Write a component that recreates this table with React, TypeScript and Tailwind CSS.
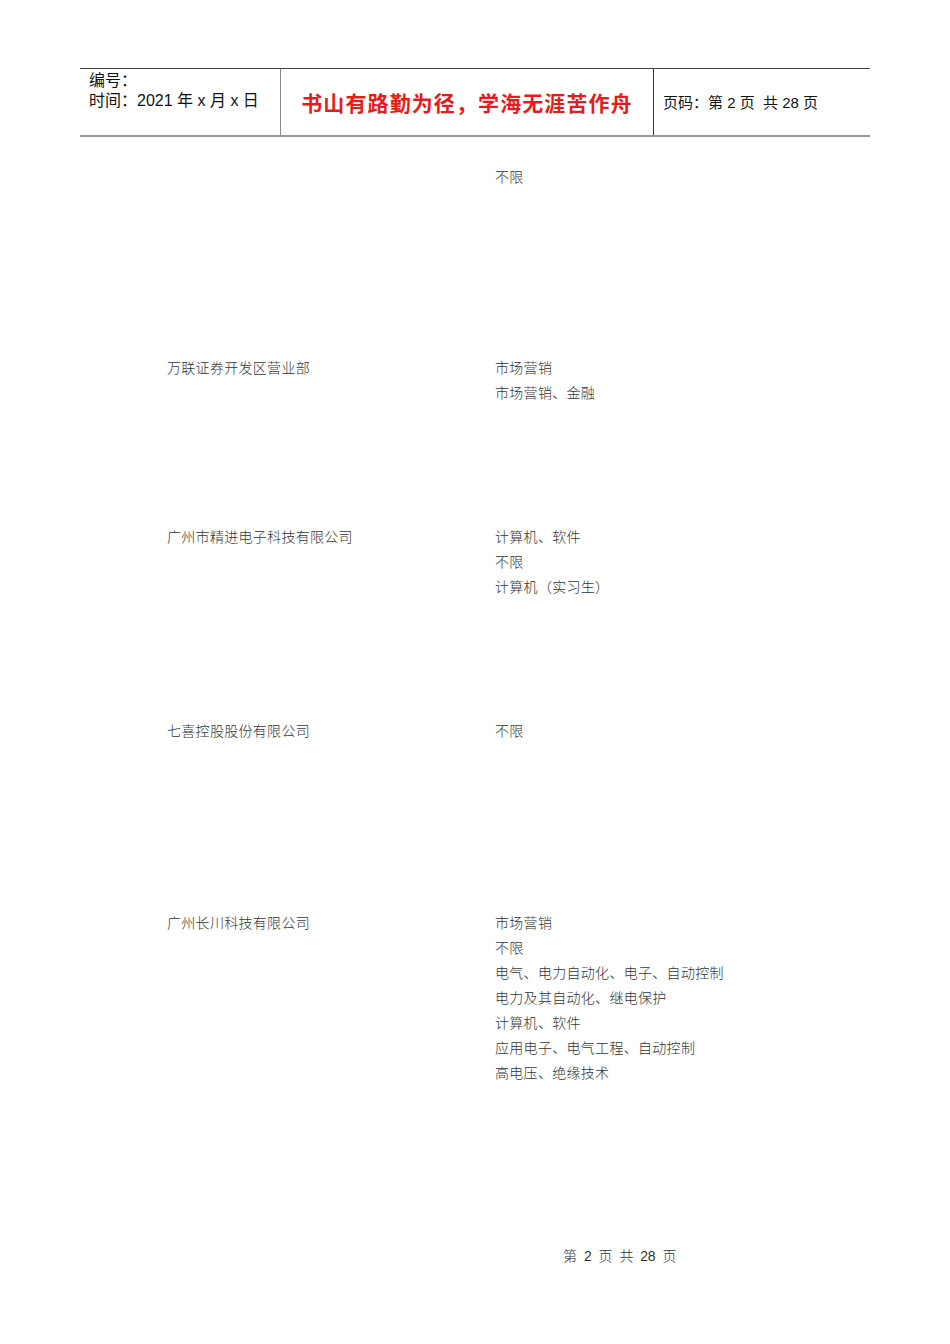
import React from "react";

const body = { fontFamily: '"Noto Sans CJK SC", "Liberation Sans", sans-serif' };
const head = { fontFamily: '"Liberation Sans", "Noto Sans CJK SC", sans-serif' };

function Block({ left, right, mt }: { left?: string; right: string[]; mt: string }) {
  return (
    <div className={`flex ${mt}`}>
      <div className="w-[495px] pl-[167px] text-[14px] leading-[25px] tracking-[0.3px] text-[#333] font-light">
        {left ?? ""}
      </div>
      <div className="flex flex-col text-[14px] leading-[25px] tracking-[0.3px] text-[#333] font-light">
        {right.map((r, i) => (
          <div key={i}>{r}</div>
        ))}
      </div>
    </div>
  );
}

export default function App() {
  return (
    <div className="w-[950px] h-[1344px] bg-white relative" style={body}>
      <div className="pt-[68px] px-[80px]">
        <div className="flex h-[69px] border-t border-[#444] border-b-2 border-b-[#999]" style={head}>
          <div className="w-[201px] border-r border-[#888] pl-[9px] pt-[2px] text-[16px] leading-[20px] text-[#111]">
            <div>编号：</div>
            <div>时间：2021 年 x 月 x 日</div>
          </div>
          <div className="w-[373px] border-r border-[#333] flex items-center justify-center pt-[2px]">
            <span
              className="text-[21px] font-semibold text-[#e51c1c] tracking-[1.1px]"
              style={body}
            >
              书山有路勤为径，学海无涯苦作舟
            </span>
          </div>
          <div className="flex-1 flex items-center pl-[9px] pt-[3px] text-[15px] text-[#111] whitespace-pre">
            页码：第 2 页  共 28 页
          </div>
        </div>
      </div>
      <div className="flex flex-col">
        <Block mt="mt-[27px]" right={["不限"]} />
        <Block mt="mt-[166px]" left="万联证券开发区营业部" right={["市场营销", "市场营销、金融"]} />
        <Block mt="mt-[119px]" left="广州市精进电子科技有限公司" right={["计算机、软件", "不限", "计算机（实习生）"]} />
        <Block mt="mt-[119px]" left="七喜控股股份有限公司" right={["不限"]} />
        <Block
          mt="mt-[167px]"
          left="广州长川科技有限公司"
          right={[
            "市场营销",
            "不限",
            "电气、电力自动化、电子、自动控制",
            "电力及其自动化、继电保护",
            "计算机、软件",
            "应用电子、电气工程、自动控制",
            "高电压、绝缘技术",
          ]}
        />
        <div
          className="mt-[159px] pl-[563px] text-[14px] leading-[25px] text-[#333] font-light whitespace-pre tracking-[-0.3px]"
          style={head}
        >
          第  2  页  共  28  页
        </div>
      </div>
    </div>
  );
}
